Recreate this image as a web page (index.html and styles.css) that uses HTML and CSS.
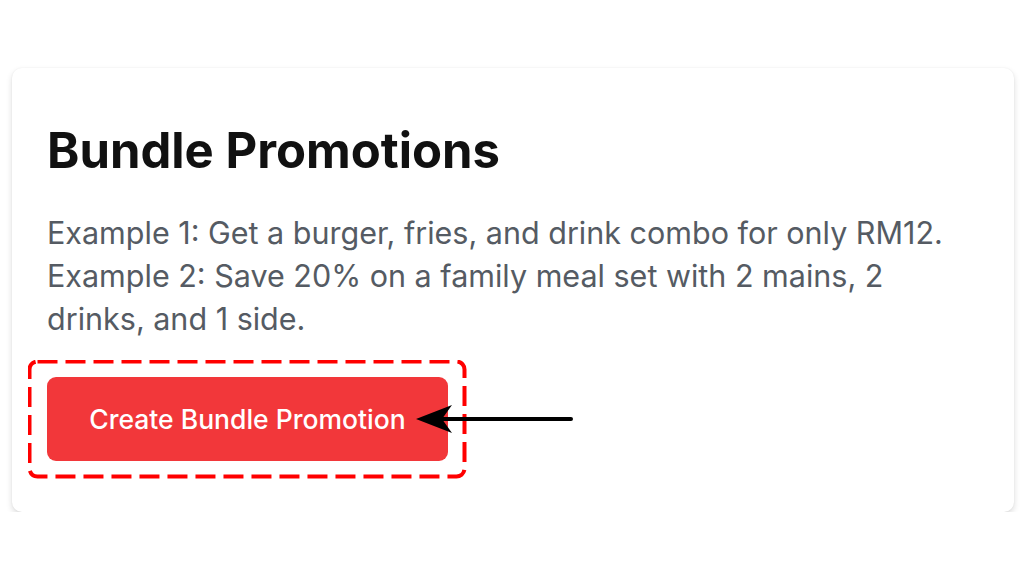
FILE: index.html
```html
<!DOCTYPE html>
<html>
<head>
<link rel="stylesheet" href="styles.css">
</head>
<body>
  <div class="card">
    <h2 class="title">Bundle Promotions</h2>
    <p class="desc">Example 1: Get a burger, fries, and drink combo for only RM12. Example 2: Save 20% on a family meal set with 2 mains, 2 drinks, and 1 side.</p>
    <div class="action">
      <button class="createbutton">Create Bundle Promotion</button>
      <!-- annotation: dashed highlight and pointer arrow -->
      <svg class="callout" width="600" height="120" viewBox="0 0 600 120">
        <rect x="1.5" y="1.5" width="435" height="115" rx="8" fill="none" stroke="#ff0000" stroke-width="4" stroke-dasharray="20 8"/>
        <line x1="543" y1="59" x2="410" y2="59" stroke="#000" stroke-width="4" stroke-linecap="round"/>
        <polygon points="388,59 424,45 414,59 424,73" fill="#000"/>
      </svg>
    </div>
  </div>
</body>
</html>
```

FILE: styles.css
```css
body {
    margin: 0;
    background: #ffffff;
    font-family: Inter, "Noto Sans", sans-serif;
  }

  * {
    box-sizing: border-box;
  }

  /* the white panel */
  .card {
    margin: 68px 10px 0 12px;
    height: 444px;
    padding: 55px 35px 0 35px;
    background: #ffffff;
    border-radius: 10px;
    box-shadow: 0 3px 6px rgba(0, 0, 0, 0.14), 0 0 2px rgba(0, 0, 0, 0.06);
  }

  .title {
    margin: 0;
    font-size: 49px;
    font-weight: 700;
    line-height: 56px;
    color: #111111;
  }

  .desc {
    margin: 32px 0 0 0;
    font-size: 30.5px;
    line-height: 43px;
    color: #555b63;
  }

  .action {
    position: relative;
    margin-top: 37px;
    display: flex;
  }

  .createbutton {
    width: 401px;
    height: 84px;
    border: none;
    border-radius: 9px;
    background: #f2373a;
    color: #ffffff;
    font-family: Inter, "Noto Sans", sans-serif;
    font-size: 26.5px;
    font-weight: 500;
  }

  .callout {
    position: absolute;
    left: -19px;
    top: -17px;
  }
```
